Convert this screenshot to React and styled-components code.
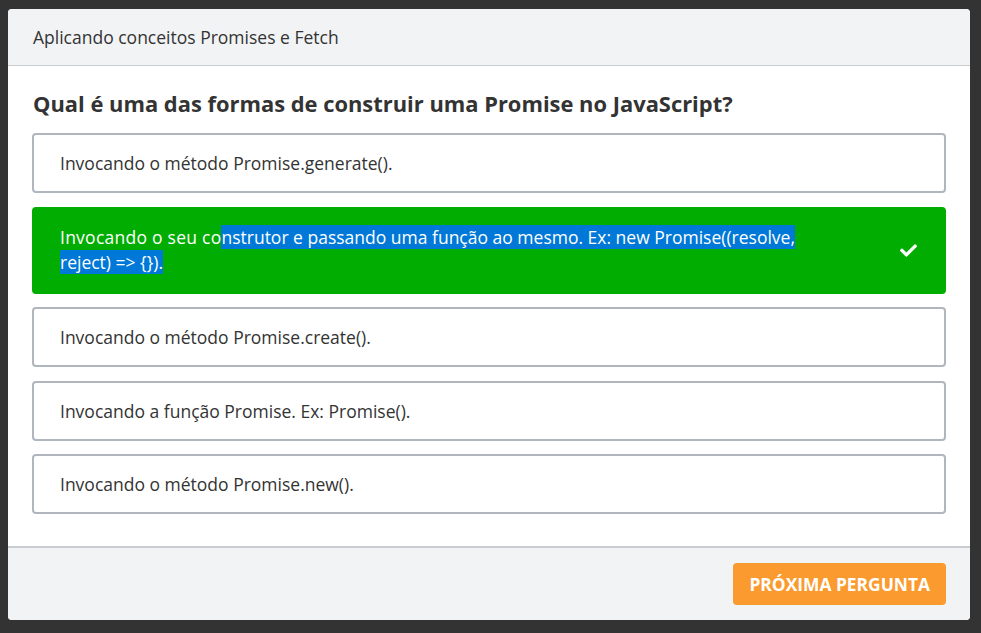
import React from "react";
import styled, { createGlobalStyle } from "styled-components";

const GlobalStyle = createGlobalStyle`
  html, body {
    margin: 0;
    padding: 0;
    background: #333333;
    font-family: "Open Sans", "Noto Sans", sans-serif;
  }
`;

const Page = styled.div`
  padding: 9px 11px 12px 8px;
`;

const Modal = styled.div`
  width: 962px;
  background: #ffffff;
  border-radius: 4px;
  overflow: hidden;
  display: flex;
  flex-direction: column;
`;

const Header = styled.div`
  height: 56px;
  display: flex;
  align-items: center;
  padding: 0 25px;
  background: #f2f3f5;
  border-bottom: 1px solid #c9ccd1;
  font-size: 17.5px;
  color: #333333;
`;

const Body = styled.div`
  padding: 23px 24px 32px 24px;
  display: flex;
  flex-direction: column;
`;

const Question = styled.h2`
  margin: 0 0 14px 1px;
  font-size: 21.9px;
  font-weight: 700;
  color: #333333;
  line-height: 30px;
`;

const Options = styled.div`
  display: flex;
  flex-direction: column;
  gap: 13.5px;
`;

const Option = styled.div`
  display: flex;
  align-items: center;
  justify-content: space-between;
  padding: 16px 26px;
  border-radius: 4px;
  border: 2px solid ${(p) => (p.$correct ? "#00ad00" : "#b0b6bd")};
  background: ${(p) => (p.$correct ? "#00ad00" : "#ffffff")};
  color: ${(p) => (p.$correct ? "#ffffff" : "#333333")};
  font-size: 17.5px;
  line-height: ${(p) => (p.$correct ? "25.5px" : "24px")};
`;

const OptionText = styled.div`
  max-width: 745px;
`;

const Selected = styled.span`
  background: #0078d7;
  color: #ffffff;
`;

const Lead = styled.span`
  letter-spacing: 0.25px;
`;

const Check = styled.svg`
  width: 17px;
  height: 13px;
  margin-right: 1px;
  flex-shrink: 0;
`;

const Footer = styled.div`
  height: 72px;
  display: flex;
  align-items: center;
  justify-content: flex-end;
  padding: 0 24px;
  background: #f2f3f5;
  border-top: 2px solid #c9ccd1;
`;

const NextButton = styled.button`
  height: 42px;
  padding: 0 16px;
  border: none;
  border-radius: 4px;
  background: #fb9a2e;
  color: #ffffff;
  font-family: "Open Sans", "Noto Sans", sans-serif;
  font-weight: 700;
  font-size: 17.4px;
  text-transform: uppercase;
  cursor: pointer;
`;

const options = [
  { text: "Invocando o método Promise.generate()." },
  { correct: true },
  { text: "Invocando o método Promise.create()." },
  { text: "Invocando a função Promise. Ex: Promise()." },
  { text: "Invocando o método Promise.new()." },
];

export default function App() {
  return (
    <>
      <GlobalStyle />
      <Page>
        <Modal>
          <Header>Aplicando conceitos Promises e Fetch</Header>
          <Body>
            <Question>Qual é uma das formas de construir uma Promise no JavaScript?</Question>
            <Options>
              {options.map((o, i) =>
                o.correct ? (
                  <Option key={i} $correct>
                    <OptionText>
                      <Lead>Invocando o seu co</Lead>
                      <Selected>
                        nstrutor e passando uma função ao mesmo. Ex: new Promise((resolve,
                        reject) =&gt; {"{})."}
                      </Selected>
                    </OptionText>
                    <Check viewBox="0 0 512 384">
                      <path
                        fill="#ffffff"
                        d="M174 376L7 209c-10-10-10-26 0-36l36-36c10-10 26-10 36 0l113 112L433 8c10-10 26-10 36 0l36 36c10 10 10 26 0 36L210 376c-10 10-26 10-36 0z"
                      />
                    </Check>
                  </Option>
                ) : (
                  <Option key={i}>
                    <OptionText>{o.text}</OptionText>
                  </Option>
                )
              )}
            </Options>
          </Body>
          <Footer>
            <NextButton>Próxima pergunta</NextButton>
          </Footer>
        </Modal>
      </Page>
    </>
  );
}
